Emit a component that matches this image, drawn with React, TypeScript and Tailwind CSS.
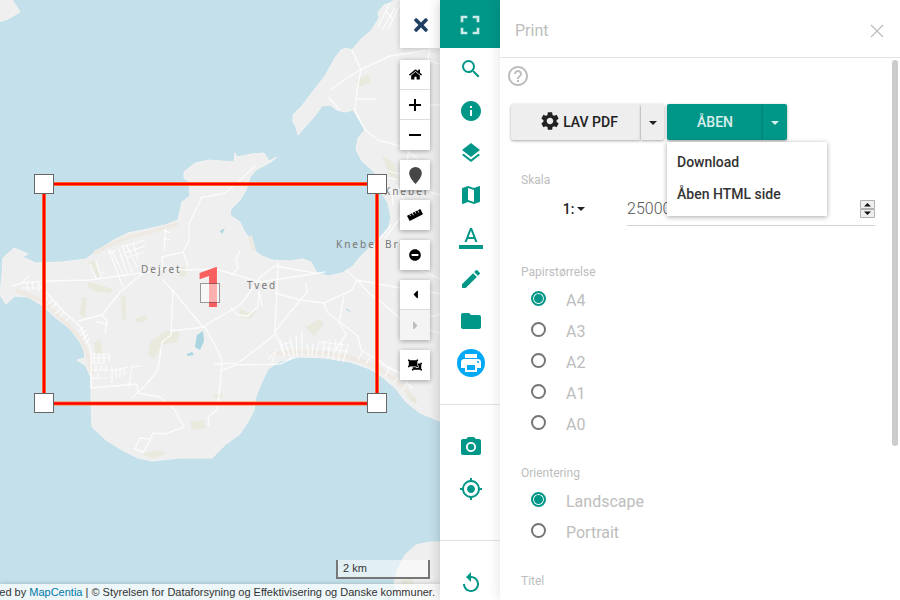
import type { ReactNode } from "react";
import {
  MdEdit,
  MdFolder,
  MdFullscreen,
  MdGpsFixed,
  MdHelpOutline,
  MdInfo,
  MdLayers,
  MdMap,
  MdPhotoCamera,
  MdPrint,
  MdReplay,
  MdSearch,
  MdSettings,
} from "react-icons/md";
import {
  FaCaretLeft,
  FaCaretRight,
  FaHome,
  FaMinusCircle,
  FaObjectUngroup,
  FaTimes,
} from "react-icons/fa";

const handles = [
  [34, 174],
  [367, 174],
  [34, 393],
  [367, 393],
];

const labelStyle =
  "fill-[#777] font-['Noto_Sans',sans-serif] text-[10px] tracking-[2px]";

function MapView() {
  return (
    <svg
      className="absolute inset-0 h-full w-full"
      viewBox="0 0 440 600"
      preserveAspectRatio="xMidYMid slice"
      role="img"
      aria-label="Kort over Dejret og Tved"
    >
      <rect x="-600" y="-600" width="1640" height="1800" fill="#c4e0ea" />
      <g fill="#efefef" stroke="#f4f3f1" strokeWidth="1" strokeLinejoin="round">
        <path d="M-2-2H11L20 12 8 19-2 22Z" />
        <path d="M442-2H397L390 3 384 5 378 12 379 18 371 31 362 38 352 50 346 48 341 50 335 58 325 76 310 95 301 107 293 115 293 122 296 127 298 135 304 128 314 117 322 106 330 105 337 110 345 112 353 110 359 120 365 130 358 138 356 150 362 161 370 168 378 176 380 190 388 203 391 218 388 229 375 243 360 257 353 266 342 273 328 276 317 273 311 262 303 259 290 261 272 260 260 255 254 250 251 240 244 231 240 222 230 215 231 209 240 200 246 190 250 177 256 170 271 162 277 157 269 161 264 153 252 154 237 157 235 153 234 162 221 161 209 160 195 163 184 172 184 178 189 182 190 196 182 202 178 220 165 225 148 229 128 233 112 241 97 251 86 259 62 262 36 263 22 257 28 254 14 248 3 258 2 275 0 295 6 304 15 296 28 297 43 306 56 318 70 329 80 342 84 351 85 358 77 360 86 366 91 378 91 400 92 427 106 440 122 450 138 458 152 461 180 458 212 458 226 444 240 434 249 420 254 410 256 396 262 382 268 369 280 361 300 357 325 358 350 362 370 369 381 376 396 389 406 402 420 413 442 422Z" />
        <path d="M442 542H430L416 545 405 555 397 571 394 584 402 602H442Z" />
      </g>
      <g fill="#eae9de">
        <path d="M88 282l12 3 12 4-1 4-14-1-9-5zM82 298l5-1-2 20-5-2zM121 296l5 1 0 22-4 1zM135 319l10-4 3 5-11 3zM150 342l16-11 14 1-3 10-15 3-8 14-6-4zM88 262l6-2 8 18-6-2zM94 343l6-4 3 14-7 2zM178 268l7-2 2 9-7 2zM190 422l14-2 2 8-14 2zM142 454l14-4 11 3-14 6zM240 309l9 4 8-3-6 9-12-2zM305 327l14-8 5 5-10 12zM356 80l12-6 3 8-12 5zM382 155l12 8 3 16-8-3zM400 580l12-2 2 6-10 3zM418 24l8 10-3 9-8-7zM408 390l10 10-3 4-9-8zM214 395l9-2-1 4-8 2z" />
      </g>
      <g fill="none" stroke="#eeeae3" strokeWidth="4">
        <path d="M94 253 112 244 130 237 150 232 178 224" />
        <path d="M15 290 43 301 62 319 80 337 88 355 92 375" />
        <path d="M250 236 254 251" />
        <path d="M270 354Q320 347 365 362 395 375 410 396" />
      </g>
      <g fill="#a9d4e2">
        <path d="M197 335l6-4 1 10-4 9-5-3zM187 354l5-2 2 3-7 1zM345 308l7 4-4-1zM220 231l5-3-3 6z" />
      </g>
      <g
        fill="none"
        stroke="#fff"
        strokeWidth="1.4"
        strokeLinejoin="round"
        strokeLinecap="round"
        opacity=".8"
      >
        <path d="M12 286 22 283 45 281 90 280 140 273 170 268 185 270 215 269 260 282 300 276 325 272" />
        <path d="M38 283 64 312 80 326 91 350 91 388 137 384 138 393 160 397 175 410 184 427 165 434 153 433 148 444 143 452 135 449 140 438 149 439" />
        <path d="M78 321 102 315 121 291 142 274" />
        <path d="M109 250 124 290M102 315 107 321 105 334M97 322 106 324" />
        <path d="M163 280 174 292 203 327 211 322 240 305 250 292 260 277 275 266 315 273" />
        <path d="M173 290 171 335 162 342 158 370 146 385 133 397M171 331 205 327" />
        <path d="M205 327 215 345 222 361 220 386 217 410 208 417 209 426M237 363 215 364M220 371 235 365 280 364 293 358" />
        <path d="M201 199 189 224 189 241 183 252 162 257 163 268M183 252 188 266M164 250 166 229" />
        <path d="M200 198 225 193 240 180 255 166" />
        <path d="M278 262 277 290 275 331 284 354M275 293 300 300 324 303 352 290 357 280 347 271M324 303 327 312 358 336 361 350 400 374" />
        <path d="M357 280 400 288 442 294M357 280 370 294 386 306 402 320 442 334M275 331 307 292 306 283" />
        <path d="M239 362 258 348 275 334M344 296 339 322 346 334 335 351" />
        <path d="M231 308 238 315 248 316 258 306 259 291 262 306M232 275 238 268 236 260 240 251" />
        <path d="M352 50 361 70 357 90 355 110 365 130 378 140 400 146 417 158M330 90 344 80 360 70 390 56 442 48M357 99H376M329 98 340 110" />
        <path d="M430 46 428 60 442 65M412 105H442M410 141 407 163 418 178 430 192 442 196M391 225 376 243" />
        <path d="M398 186 408 210 400 218 385 238M400 260 442 280M400 330 418 320 442 314" />
      </g>
      <g fill="none" stroke="#fff" strokeWidth="1.2" opacity=".8">
        <path d="M112 251 125 278M118 247 128 276M122 245 132 272M126 244 137 267M133 242 138 260M122 247 145 240M124 253 145 246M126 258 144 252M108 253 116 250M163 230 171 233M163 238 170 240" />
        <path d="M90 264 96 278M96 261 101 278M101 274 104 272M22 283 29 276M27 282 28 291M32 282 33 290M22 288 42 288M38 285 40 292M48 297 44 301M52 300 47 305M56 304 51 309M60 309 55 314M64 312 60 317M69 317 65 322M84 327 78 332M86 330 80 336M88 334 82 340M90 338 85 344" />
        <path d="M91 354H110M91 358H110M91 363H106M91 370H108M91 378H107M94 354V362M99 354V362M104 354V362M109 354V362M96 365V371M101 365V371M106 365V371M98 373V379M112 367V383M116 369V378M120 368V378M124 367V375M112 371 128 367M132 366 129 387M132 367 142 366" />
        <path d="M268 360 274 352M272 362 277 349M280 340 285 356M285 343 290 356M290 338 294 356M296 336 297 356M302 332 302 356M307 343 309 356M313 344 312 356M319 341 316 357M325 340 322 357M330 339 328 358M336 339 333 360M342 342 338 361M348 344 343 362M320 342 345 345M324 348 348 352M280 345 292 342M358 360 362 352M366 364 370 357M375 369 381 360M385 376 391 366M394 383 401 373M402 391 408 381M381 364 398 372 412 388" />
        <path d="M390 3 378 27M395 8 382 30M400 4 388 30M385 10 392 18M392 188 393 205M397 184 397 196M386 190 396 190M389 178 399 180M388 171 400 174" />
      </g>
      <g className={labelStyle}>
        <text x="141" y="273">Dejret</text>
        <text x="247" y="289">Tved</text>
        <text x="336" y="248">Knebel Bro</text>
        <text x="384" y="195">Knebel</text>
      </g>
      <text
        x="211"
        y="307"
        textAnchor="middle"
        className="fill-[#ff0000] font-[Roboto,sans-serif] text-[56px] font-bold opacity-60"
      >
        1
      </text>
      <rect x="44" y="184" width="333" height="219.5" fill="none" stroke="#ff7f33" strokeWidth="4" />
      <rect x="44" y="184" width="333" height="219.5" fill="none" stroke="#f00" strokeWidth="2.4" />
      {handles.map(([x, y]) => (
        <rect key={`${x}-${y}`} x={x + 0.5} y={y + 0.5} width="19" height="19" fill="#fff" stroke="#666" />
      ))}
      <rect x="200.5" y="283.5" width="19" height="19" fill="#fff" stroke="#444" opacity=".5" />
    </svg>
  );
}

function ControlGroup({ children }: { children: ReactNode }) {
  return (
    <div className="flex w-[30px] flex-col divide-y divide-[#ddd] bg-white shadow-[0_1px_5px_rgba(0,0,0,0.35)]">
      {children}
    </div>
  );
}

function ControlButton({
  label,
  disabled,
  children,
}: {
  label: string;
  disabled?: boolean;
  children: ReactNode;
}) {
  return (
    <button
      type="button"
      aria-label={label}
      disabled={disabled}
      className="flex h-[30px] w-full items-center justify-center text-black disabled:bg-[#f4f4f4] disabled:text-[#bbb]"
    >
      {children}
    </button>
  );
}

function MapControls() {
  return (
    <div className="absolute top-0 right-0 flex w-10 flex-col gap-[10px]">
      <button
        type="button"
        aria-label="Luk"
        className="mb-0.5 flex h-12 w-full items-center justify-center bg-white pt-px pl-0.5 text-[#1f3e63] shadow-[0_1px_6px_rgba(0,0,0,0.2)]"
      >
        <FaTimes size={20} />
      </button>
      <ControlGroup>
        <ControlButton label="Hjem">
          <FaHome size={13} />
        </ControlButton>
        <ControlButton label="Zoom ind">
          <svg width="12" height="12" stroke="#000" strokeWidth="2">
            <path d="M6 0v12M0 6h12" />
          </svg>
        </ControlButton>
        <ControlButton label="Zoom ud">
          <svg width="12" height="12" stroke="#000" strokeWidth="2">
            <path d="M0 6h12" />
          </svg>
        </ControlButton>
      </ControlGroup>
      <ControlGroup>
        <ControlButton label="Find min position">
          <svg width="13" height="17" viewBox="0 0 13 17" fill="#464646">
            <path d="M6.500 0A6.300 6.300 0 0 0 .2 6.300C.2 9.500 3.500 14 6.500 17 9.500 14 12.800 9.500 12.800 6.300A6.300 6.300 0 0 0 6.500 0Z" />
          </svg>
        </ControlButton>
      </ControlGroup>
      <ControlGroup>
        <ControlButton label="Mål afstand">
          <svg width="16" height="14" viewBox="0 0 16 14">
            <g transform="rotate(-27 8 7)">
              <rect x="0.500" y="4" width="15" height="6" rx=".6" />
              <path d="M3.500 4v2M6.500 4v2.500M9.500 4v2M12.500 4v2.500" stroke="#fff" strokeWidth=".8" />
            </g>
          </svg>
        </ControlButton>
      </ControlGroup>
      <ControlGroup>
        <ControlButton label="Ryd">
          <FaMinusCircle size={12} />
        </ControlButton>
      </ControlGroup>
      <ControlGroup>
        <ControlButton label="Forrige udsnit">
          <FaCaretLeft size={13} />
        </ControlButton>
        <ControlButton label="Næste udsnit" disabled>
          <FaCaretRight size={13} />
        </ControlButton>
      </ControlGroup>
      <ControlGroup>
        <ControlButton label="Zoom til område">
          <FaObjectUngroup size={14} />
        </ControlButton>
      </ControlGroup>
    </div>
  );
}

function MapFooter() {
  return (
    <div className="absolute inset-x-0 bottom-0 flex flex-col items-end gap-[5px] font-['Liberation_Sans',Arial,sans-serif] text-[11px] text-[#333]">
      <div className="mr-[10px] h-[19px] w-[94px] border-2 border-t-0 border-[#777] bg-white/50 px-[5px] leading-[17px]">
        2 km
      </div>
      <div className="flex h-4 w-full justify-end bg-white/70 px-[5px] leading-4 whitespace-nowrap shadow-[0_0_5px_rgba(0,0,0,0.2)]">
        <p>
          Powered by <a href="#mapcentia" className="text-[#0078a8]">MapCentia</a> | © Styrelsen for
          Dataforsyning og Effektivisering og Danske kommuner.
        </p>
      </div>
    </div>
  );
}

function TextColorIcon() {
  return (
    <svg width="24" height="24" viewBox="0 0 24 24" fill="currentColor">
      <path d="M0 20h24v4H0z" />
      <path d="M11 3 5.500 17h2.250l1.120-3h6.250l1.120 3h2.250L13 3h-2zm-1.380 9L12 5.670 14.380 12H9.620z" />
    </svg>
  );
}

function RailButton({ label, children }: { label: string; children: ReactNode }) {
  return (
    <button
      type="button"
      aria-label={label}
      className="flex h-[42px] w-full shrink-0 items-center justify-center pl-0.5"
    >
      {children}
    </button>
  );
}

function ToolRail() {
  return (
    <nav className="relative flex w-[60px] shrink-0 flex-col bg-white text-[#009688] shadow-[0_0_12px_rgba(0,0,0,0.2)]">
      <button
        type="button"
        aria-label="Fuld skærm"
        className="flex h-12 w-full shrink-0 items-center justify-center bg-[#009688] pt-px text-white/80"
      >
        <MdFullscreen size={32} />
      </button>
      <RailButton label="Søg"><MdSearch size={24} /></RailButton>
      <RailButton label="Information"><MdInfo size={24} /></RailButton>
      <RailButton label="Lag"><MdLayers size={24} /></RailButton>
      <RailButton label="Baggrundskort"><MdMap size={24} /></RailButton>
      <RailButton label="Signatur"><TextColorIcon /></RailButton>
      <RailButton label="Tegn"><MdEdit size={24} /></RailButton>
      <RailButton label="Projekter"><MdFolder size={24} /></RailButton>
      <RailButton label="Print">
        <span className="flex size-7 items-center justify-center rounded-full bg-[#03a9f4] text-white">
          <MdPrint size={24} />
        </span>
      </RailButton>
      <div className="mt-5 flex flex-col border-t border-[#e2e2e2] py-[21px]">
        <RailButton label="Skærmbillede"><MdPhotoCamera size={24} /></RailButton>
        <RailButton label="Min position"><MdGpsFixed size={24} /></RailButton>
      </div>
      <div className="mt-[9px] flex flex-col border-t border-[#e2e2e2] pt-[21px]">
        <RailButton label="Nulstil"><MdReplay size={24} /></RailButton>
      </div>
    </nav>
  );
}

function Caret() {
  return (
    <svg width="8" height="4" viewBox="0 0 8 4" fill="currentColor">
      <path d="M0 0h8L4 4z" />
    </svg>
  );
}

function ButtonRow() {
  return (
    <div className="mt-4 flex gap-[3px] pl-[11px] text-sm font-medium">
      <div className="flex gap-px">
        <button
          type="button"
          className="flex h-9 w-[129px] items-center justify-center gap-0.5 rounded-l-xs bg-[#eee] pl-1.5 text-[#212121] shadow-[0_1px_3px_rgba(0,0,0,0.35)]"
        >
          <MdSettings size={22} className="-mt-0.5" />
          LAV PDF
        </button>
        <button
          type="button"
          aria-label="Flere PDF-valg"
          className="flex h-9 w-[23px] items-center justify-center rounded-r-xs bg-[#eee] pt-0.5 text-[#212121] shadow-[0_1px_3px_rgba(0,0,0,0.35)]"
        >
          <Caret />
        </button>
      </div>
      <div className="relative flex text-white/85">
        <button
          type="button"
          className="h-9 w-24 rounded-l-xs bg-[#009688] shadow-[0_1px_3px_rgba(0,0,0,0.35)]"
        >
          ÅBEN
        </button>
        <button
          type="button"
          aria-label="Flere åbn-valg"
          aria-expanded="true"
          className="flex h-9 w-6 items-center justify-center rounded-r-xs bg-[#009688] pt-0.5 shadow-[0_1px_3px_rgba(0,0,0,0.35)]"
        >
          <Caret />
        </button>
        <ul className="absolute top-[38px] left-0 z-10 w-40 bg-white pt-1 pb-1.5 text-[#333] shadow-[0_1px_5px_rgba(0,0,0,0.35)]">
          <li><a href="#download" className="block px-[10px] leading-8">Download</a></li>
          <li><a href="#html" className="block px-[10px] leading-8">Åben HTML side</a></li>
        </ul>
      </div>
    </div>
  );
}

function RadioGroup({
  name,
  title,
  options,
}: {
  name: string;
  title: string;
  options: string[];
}) {
  return (
    <fieldset>
      <legend className="mb-[3px] text-xs leading-4">{title}</legend>
      {options.map((option, index) => (
        <label key={option} className="flex h-[31px] items-center gap-5 pl-[10px] text-base">
          <input
            type="radio"
            name={name}
            defaultChecked={index === 0}
            className="size-[15px] appearance-none rounded-full border-2 border-[#757575] checked:border-[#009688] checked:bg-[#009688] checked:shadow-[inset_0_0_0_1px_white]"
          />
          <span className="pt-1">{option}</span>
        </label>
      ))}
    </fieldset>
  );
}

function PrintPanel() {
  return (
    <section className="relative flex w-[400px] shrink-0 flex-col bg-white font-[Roboto,sans-serif] text-[#bdbdbd] shadow-[0_0_12px_rgba(0,0,0,0.12)]">
      <header className="flex h-[58px] shrink-0 items-center justify-between border-b border-[#e2e2e2] pt-1 pr-4 pl-[15px]">
        <h1 className="text-base">Print</h1>
        <button type="button" aria-label="Luk panel">
          <svg width="14" height="14" viewBox="0 0 14 14" stroke="#bdbdbd" strokeWidth="1.3">
            <path d="M1 1l12 12M13 1 1 13" />
          </svg>
        </button>
      </header>
      <div className="relative min-h-0 flex-1 overflow-hidden pt-1.5">
        <button type="button" aria-label="Hjælp" className="ml-1.5 block">
          <MdHelpOutline size={24} />
        </button>
        <ButtonRow />
        <form className="mt-8 pr-[25px] pl-[21px]">
          <label htmlFor="scale" className="block text-xs leading-4">Skala</label>
          <div className="flex pt-1">
            <button
              type="button"
              className="flex w-[106px] shrink-0 items-center justify-center gap-[3px] text-sm font-medium text-[#212121]"
            >
              1:
              <Caret />
            </button>
            <div className="relative flex flex-1 items-center border-b border-[#d2d2d2]">
              <input
                id="scale"
                type="number"
                defaultValue="25000"
                className="h-[33px] w-full [appearance:textfield] bg-transparent text-base font-light text-[#555] outline-none [&::-webkit-inner-spin-button]:appearance-none"
              />
              <svg className="absolute right-0" width="15" height="18" viewBox="0 0 15 18">
                <path d="M.5.5h14v8H.5zM.5 9.500h14v8H.5z" fill="#efefef" stroke="#b0b0b0" />
                <path d="M4 6.500h7L7.500 3zM4 11.500h7L7.500 15z" fill="#111" />
              </svg>
            </div>
          </div>
          <div className="flex flex-col gap-[27px] pt-[38px]">
            <RadioGroup name="size" title="Papirstørrelse" options={["A4", "A3", "A2", "A1", "A0"]} />
            <RadioGroup name="orientation" title="Orientering" options={["Landscape", "Portrait"]} />
            <label className="block text-xs leading-4">
              Titel
              <input type="text" className="block h-8 w-full border-b border-[#d2d2d2] outline-none" />
            </label>
          </div>
        </form>
        <div className="absolute top-0.5 right-[2px] h-[386px] w-1.5 rounded-full bg-[#ccc]" />
      </div>
    </section>
  );
}

export default function App() {
  return (
    <main className="flex h-screen min-h-[600px] overflow-hidden bg-white">
      <div className="relative min-w-0 flex-1 overflow-hidden">
        <MapView />
        <MapControls />
        <MapFooter />
      </div>
      <ToolRail />
      <PrintPanel />
    </main>
  );
}
